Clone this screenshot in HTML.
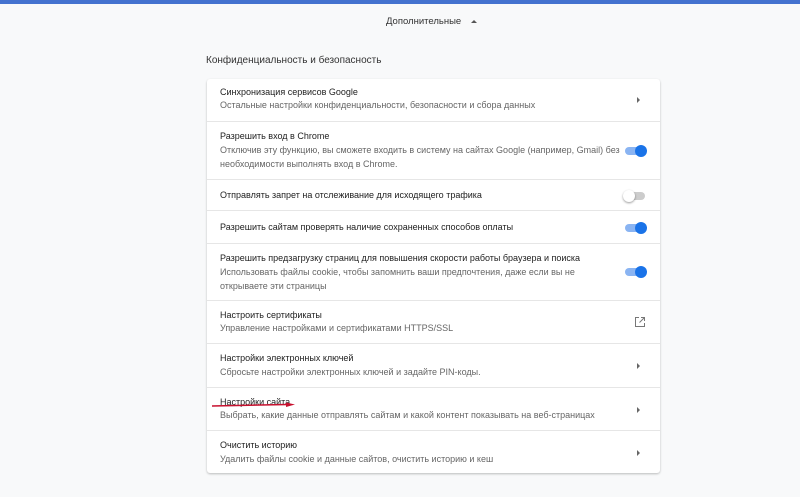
<!DOCTYPE html>
<html><head><meta charset="utf-8"><style>
*{margin:0;padding:0;box-sizing:border-box}
body{width:800px;height:497px;background:#f8f9fa;font-family:"Liberation Sans",sans-serif;position:relative;overflow:hidden;color:#333}
.bar{position:absolute;left:0;top:0;width:800px;height:4px;background:#4472cf}
.adv{position:absolute;left:386px;top:16px;font-size:9.5px;color:#333}
.tri{position:absolute;left:471px;top:20px;width:0;height:0;border-left:3px solid transparent;border-right:3px solid transparent;border-bottom:3px solid #555}
.h{position:absolute;left:206px;top:55px;font-size:10px;color:#333}
.card{position:absolute;left:207px;top:79px;width:453px;height:394px;background:#fff;border-radius:3px;box-shadow:0 1px 2px rgba(0,0,0,.25)}
.r{position:absolute;left:0;width:453px;border-top:1px solid #e6e6e6}
.r:first-child{border-top:none}
.t{position:absolute;left:13px;font-size:9px;color:#222;white-space:nowrap}
.s{position:absolute;left:13px;font-size:9px;color:#666;line-height:13.5px}
.arr{position:absolute;right:20px;width:0;height:0;border-top:3px solid transparent;border-bottom:3px solid transparent;border-left:3px solid #666}
.tg{position:absolute;right:15px;width:20px;height:8px;border-radius:4px;background:#8ab4f2}
.tg:after{content:"";position:absolute;right:-2px;top:-2px;width:12px;height:12px;border-radius:6px;background:#1a73e8}
.tg.off{background:#ccc}
.tg.off:after{right:auto;left:-2px;background:#fff;box-shadow:0 1px 2px rgba(0,0,0,.4)}
</style></head><body>
<div class="bar"></div>
<div class="adv">Дополнительные</div><div class="tri"></div>
<div class="h">Конфиденциальность и безопасность</div>
<div class="card">
<div class="r" style="top:0;height:42px"><div class="t" style="top:8px">Синхронизация сервисов Google</div><div class="s" style="top:20px">Остальные настройки конфиденциальности, безопасности и сбора данных</div><div class="arr" style="top:18px"></div></div>
<div class="r" style="top:42px;height:58px"><div class="t" style="top:9px">Разрешить вход в Chrome</div><div class="s" style="top:22px;width:400px">Отключив эту функцию, вы сможете входить в систему на сайтах Google (например, Gmail) без необходимости выполнять вход в Chrome.</div><div class="tg" style="top:25px"></div></div>
<div class="r" style="top:100px;height:31px"><div class="t" style="top:10px">Отправлять запрет на отслеживание для исходящего трафика</div><div class="tg off" style="top:12px"></div></div>
<div class="r" style="top:131px;height:33px"><div class="t" style="top:11px">Разрешить сайтам проверять наличие сохраненных способов оплаты</div><div class="tg" style="top:13px"></div></div>
<div class="r" style="top:164px;height:57px"><div class="t" style="top:9px">Разрешить предзагрузку страниц для повышения скорости работы браузера и поиска</div><div class="s" style="top:22px;width:365px">Использовать файлы cookie, чтобы запомнить ваши предпочтения, даже если вы не открываете эти страницы</div><div class="tg" style="top:24px"></div></div>
<div class="r" style="top:221px;height:43px"><div class="t" style="top:9px">Настроить сертификаты</div><div class="s" style="top:21px">Управление настройками и сертификатами HTTPS/SSL</div>
<svg style="position:absolute;right:14px;top:15px" width="12" height="12" viewBox="0 0 12 12" fill="none" stroke="#777" stroke-width="1"><path d="M5 1.5H1.5v9h9V7M7 1.5h3.5V5M10.5 1.5L5.5 6.5"/></svg></div>
<div class="r" style="top:264px;height:44px"><div class="t" style="top:9px">Настройки электронных ключей</div><div class="s" style="top:22px">Сбросьте настройки электронных ключей и задайте PIN-коды.</div><div class="arr" style="top:19px"></div></div>
<div class="r" style="top:308px;height:43px"><div class="t" style="top:9px">Настройки сайта</div><div class="s" style="top:21px">Выбрать, какие данные отправлять сайтам и какой контент показывать на веб-страницах</div><div class="arr" style="top:19px"></div>
<svg style="position:absolute;left:5px;top:14px" width="90" height="6"><path d="M0 4L76 2.5" stroke="#c8102e" stroke-width="1.5"/><path d="M74 0.5L83 2.5L74 5Z" fill="#c8102e"/></svg></div>
<div class="r" style="top:351px;height:43px"><div class="t" style="top:9px">Очистить историю</div><div class="s" style="top:22px">Удалить файлы cookie и данные сайтов, очистить историю и кеш</div><div class="arr" style="top:19px"></div></div>
</div>
</body></html>
